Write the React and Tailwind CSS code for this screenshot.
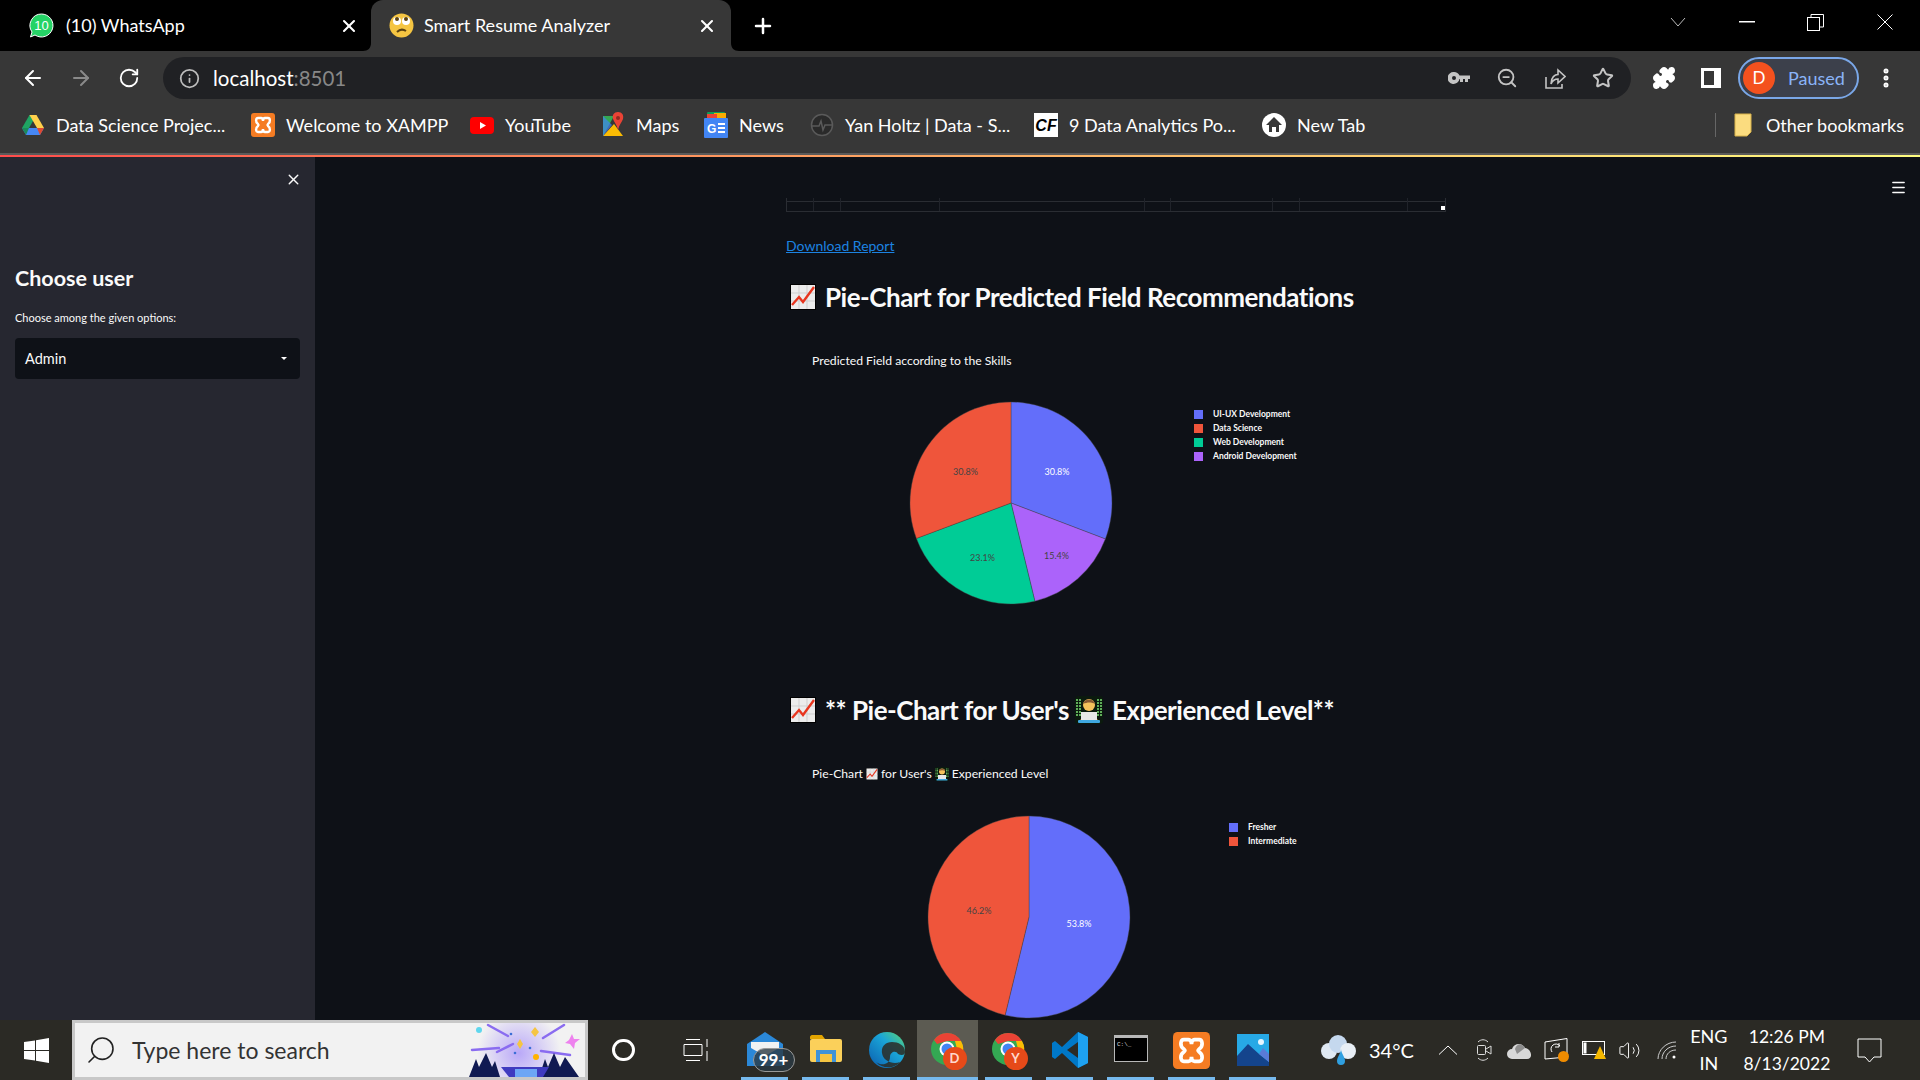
import { ArrowLeft, ArrowRight, RotateCw, Info, ZoomOut, Star, Puzzle, MoreVertical, X, Plus, Menu, Search, Volume2 } from 'lucide-react';

const FONT = "font-['Lato','Noto_Sans',sans-serif]";

function Pie({ slices, labels, size = 204 }) {
  const c = size / 2;
  const r = 101;
  let start = 0;
  const point = (deg) => {
    const a = ((deg - 90) * Math.PI) / 180;
    return [c + r * Math.cos(a), c + r * Math.sin(a)];
  };
  return (
    <svg width={size} height={size} viewBox={`0 0 ${size} ${size}`} className="shrink-0">
      {slices.map((s) => {
        const end = start + (s.pct / 100) * 360;
        const [x1, y1] = point(start);
        const [x2, y2] = point(end);
        const large = end - start > 180 ? 1 : 0;
        start = end;
        return <path key={s.color} d={`M${c} ${c}L${x1} ${y1}A${r} ${r} 0 ${large} 1 ${x2} ${y2}Z`} fill={s.color} stroke="#444" strokeWidth="0.4" />;
      })}
      {labels.map((l) => (
        <text key={l.t + l.x} x={l.x} y={l.y} textAnchor="middle" dominantBaseline="middle" fontSize="9" fontFamily="Lato" fill={l.fill}>
          {l.t}
        </text>
      ))}
    </svg>
  );
}

function Legend({ items }) {
  return (
    <div className="flex flex-col gap-[4px]">
      {items.map((i) => (
        <div key={i.name} className="flex items-center gap-[10px] h-[10px] text-[8.5px] font-bold text-[#fafafa]">
          <span className="w-[9px] h-[9px]" style={{ background: i.color }} />
          <span>{i.name}</span>
        </div>
      ))}
    </div>
  );
}

function ChartEmoji({ size = 26 }) {
  return (
    <svg width={size} height={size} viewBox="0 0 26 26" className="shrink-0">
      <rect width="26" height="26" fill="#000" />
      <rect x="1" y="1" width="24" height="24" fill="#ececec" />
      <path d="M1 9H25M1 17H25M9 1V25M17 1V25" stroke="#cfcfcf" />
      <path d="M2 21L9 13L13 18L24 3" stroke="#e8361f" strokeWidth="2.4" fill="none" />
    </svg>
  );
}

function TechEmoji({ size = 28 }) {
  return (
    <svg width={size} height={size} viewBox="0 0 28 28" className="shrink-0">
      <rect width="28" height="28" rx="3" fill="#0b1a0e" />
      <path d="M2 3V20M5 3V20M23 3V20M26 3V20" stroke="#5fae5a" strokeWidth="2" strokeDasharray="2 1" />
      <circle cx="14" cy="9" r="6" fill="#f6c25c" />
      <path d="M8 8C9 2 19 2 20 8C17 6 12 6 8 8Z" fill="#8a5a33" />
      <path d="M5 26C5 17 23 17 23 26Z" fill="#f2a93b" />
      <rect x="6" y="16" width="16" height="9" fill="#e8e8e8" />
      <rect x="3" y="24" width="22" height="3" rx="1" fill="#3fa7e0" />
    </svg>
  );
}

function DriveIcon() {
  return (
    <svg width="24" height="24" viewBox="0 0 24 24" className="shrink-0">
      <path d="M8.500 2H15.500L8 15H1Z" fill="#1fa463" />
      <path d="M8.500 2H15.500L23 15H16Z" fill="#ffd04b" />
      <path d="M1 15H23L19 22H5Z" fill="#4687f4" />
      <path d="M1 15L8 15L5 22Z" fill="#1a8a5a" />
      <path d="M16 15H23L19 22Z" fill="#e0492f" />
    </svg>
  );
}

function XamppIcon({ size = 24 }) {
  return (
    <svg width={size} height={size} viewBox="0 0 24 24" className="shrink-0">
      <rect width="24" height="24" rx="3" fill="#f57c23" />
      <path d="M7 5H10C12 5 12 8 12 8C12 8 12 5 14 5H17C19 5 20 9 17 11C16 12 16 12 17 13C20 15 19 19 17 19H14C12 19 12 16 12 16C12 16 12 19 10 19H7C5 19 4 15 7 13C8 12 8 12 7 11C4 9 5 5 7 5Z" fill="none" stroke="#fff" strokeWidth="2.400" />
    </svg>
  );
}

function YoutubeIcon() {
  return (
    <svg width="24" height="24" viewBox="0 0 24 24" className="shrink-0">
      <rect y="4" width="24" height="17" rx="4" fill="#f00" />
      <path d="M10 9L16 12.500L10 16Z" fill="#fff" />
    </svg>
  );
}

function MapsIcon() {
  return (
    <svg width="24" height="26" viewBox="0 0 24 26" className="shrink-0">
      <path d="M2 4L13 4L2 24Z" fill="#34a853" />
      <path d="M2 24L13 12L22 24Z" fill="#fbbc04" />
      <path d="M2 4L11 13L2 24Z" fill="#4285f4" opacity="0.7" />
      <path d="M17 0C13 0 11 3 12 7C13 10 16 13 17 18C18 13 21 10 22 7C23 3 21 0 17 0Z" fill="#ea4335" />
      <circle cx="17" cy="6" r="2" fill="#8f2a20" />
    </svg>
  );
}

function NewsIcon() {
  return (
    <svg width="24" height="26" viewBox="0 0 24 26" className="shrink-0">
      <rect x="3" y="0" width="18" height="8" rx="1" fill="#0c9d58" />
      <rect x="10" y="1" width="12" height="7" fill="#f9ab00" />
      <rect x="3" y="2" width="10" height="6" fill="#ea4335" />
      <rect y="6" width="24" height="20" rx="1" fill="#4285f4" />
      <text x="3" y="21" fontSize="12" fontWeight="700" fontFamily="Liberation Sans" fill="#fff">G</text>
      <path d="M14 12H21M14 16H21M14 20H21" stroke="#fff" strokeWidth="2" />
    </svg>
  );
}

function ChromeIcon({ letter }) {
  return (
    <div className="relative w-[36px] h-[36px]">
      <svg width="34" height="34" viewBox="0 0 34 34" className="absolute left-0 top-0">
        <circle cx="17" cy="17" r="16" fill="#34a853" />
        <path d="M17 1A16 16 0 0 1 31 9H17L7 12L4 8A16 16 0 0 1 17 1Z" fill="#ea4335" />
        <path d="M31 9A16 16 0 0 1 20 33L27 17L25 9Z" fill="#fbbc04" />
        <circle cx="17" cy="17" r="7.500" fill="#fff" />
        <circle cx="17" cy="17" r="5.500" fill="#4285f4" />
      </svg>
      <span className="absolute left-[13px] top-[15px] w-[24px] h-[23px] rounded-full bg-[#e64a19] text-[13px] font-bold text-[#ffd9cc] flex items-center justify-center">{letter}</span>
    </div>
  );
}

function Bookmark({ icon, label, width }) {
  return (
    <div className="flex items-center gap-[11px] shrink-0" style={{ width }}>
      {icon}
      <span className="whitespace-nowrap">{label}</span>
    </div>
  );
}

function TabBar() {
  return (
    <div className="h-[51px] bg-black flex items-end text-[18px] text-white shrink-0">
      <div className="w-[371px] h-[51px] flex items-center pl-[29px] pr-[12px]">
        <svg width="25" height="25" viewBox="0 0 25 25" className="shrink-0">
          <path d="M12.500 1A11.500 11.500 0 1 1 6 22L1.500 24L3 19A11.500 11.500 0 0 1 12.500 1Z" fill="#25d366" stroke="#fff" strokeWidth="1" />
          <text x="12.500" y="17" textAnchor="middle" fontSize="13" fontFamily="Liberation Sans" fill="#fff">10</text>
        </svg>
        <span className="ml-[12px] flex-1">(10) WhatsApp</span>
        <X size={20} strokeWidth={2.5} />
      </div>
      <div className="relative w-[360px] h-[51px] bg-[#373737] rounded-t-[12px] flex items-center pl-[18px] pr-[14px]">
        <svg width="8" height="8" viewBox="0 0 8 8" className="absolute -left-[8px] bottom-0">
          <path d="M8 0V8H0C5 8 8 5 8 0Z" fill="#373737" />
        </svg>
        <svg width="8" height="8" viewBox="0 0 8 8" className="absolute -right-[8px] bottom-0">
          <path d="M0 0V8H8C3 8 0 5 0 0Z" fill="#373737" />
        </svg>
        <svg width="25" height="25" viewBox="0 0 25 25" className="shrink-0">
          <circle cx="12.500" cy="12.500" r="12" fill="#f5c542" />
          <circle cx="8" cy="8" r="4" fill="#fff" />
          <circle cx="17" cy="8" r="4" fill="#fff" />
          <circle cx="8" cy="6" r="2" fill="#5b4210" />
          <circle cx="17" cy="6" r="2" fill="#5b4210" />
          <path d="M8 19C11 16 14 16 17 18" stroke="#5b4210" strokeWidth="2" fill="none" />
        </svg>
        <span className="ml-[10px] flex-1">Smart Resume Analyzer</span>
        <X size={20} strokeWidth={2.5} />
      </div>
      <div className="h-[51px] flex items-center ml-[20px]">
        <Plus size={24} strokeWidth={2.5} />
      </div>
      <div className="ml-auto h-[44px] self-start flex items-center text-white mr-px">
        <div className="w-[69px] flex justify-center">
          <svg width="16" height="10" viewBox="0 0 16 10" fill="none" stroke="#bbb"><path d="M1 1L8 9L15 1" /></svg>
        </div>
        <div className="w-[69px] flex justify-center">
          <svg width="16" height="2" viewBox="0 0 16 2"><rect width="16" height="1.500" fill="#fff" /></svg>
        </div>
        <div className="w-[69px] flex justify-center">
          <svg width="17" height="17" viewBox="0 0 17 17" fill="none" stroke="#fff">
            <rect x="0.500" y="3.500" width="12" height="13" />
            <path d="M4 3V0.500H16.500V13H13" />
          </svg>
        </div>
        <div className="w-[69px] flex justify-center">
          <svg width="16" height="16" viewBox="0 0 16 16" fill="none" stroke="#fff"><path d="M0.500 0.500L15.500 15.500M15.500 0.500L0.500 15.500" /></svg>
        </div>
      </div>
    </div>
  );
}

function Toolbar() {
  return (
    <div className="h-[54px] bg-[#373737] flex items-center text-white shrink-0">
      <ArrowLeft size={24} className="ml-[21px]" />
      <ArrowRight size={24} className="ml-[24px] text-[#8a8a8a]" />
      <RotateCw size={22} className="ml-[25px]" />
      <div className="ml-[23px] w-[1468px] h-[42px] rounded-full bg-[#202124] flex items-center pl-[16px] pr-[17px]">
        <Info size={21} className="text-[#bdbdbd]" />
        <span className="ml-[13px] text-[20.5px]">localhost<span className="text-[#888]">:8501</span></span>
        <div className="ml-auto flex items-center gap-[26px] text-[#c4c4c4]">
          <svg width="22" height="22" viewBox="0 0 22 22" fill="#c4c4c4">
            <path fillRule="evenodd" d="M6 5A6 6 0 0 1 11.500 8.500H22V12H20V15H17V12H15V15H12V12H11.500A6 6 0 1 1 6 5ZM6 9A2 2 0 1 0 6 13A2 2 0 0 0 6 9Z" />
          </svg>
          <ZoomOut size={22} />
          <svg width="22" height="24" viewBox="0 0 22 24" fill="none" stroke="#c4c4c4" strokeWidth="1.600">
            <path d="M2 11V22H18V18" />
            <path d="M7 18C7 11 11 8.500 14 8.500V4L21 10.500L14 17V13C11 13 8.500 14.500 7 18Z" />
          </svg>
          <Star size={22} strokeWidth={2.2} />
        </div>
      </div>
      <Puzzle size={24} fill="#fff" className="ml-[21px]" />
      <svg width="20" height="20" viewBox="0 0 20 20" className="ml-[25px]">
        <rect width="20" height="20" fill="#fff" />
        <rect x="3" y="3" width="10" height="14" fill="#373737" />
      </svg>
      <div className="ml-[17px] w-[121px] h-[42px] rounded-full border-2 border-[#7aa7e8] bg-[#3c404b] flex items-center pl-[3px]">
        <span className="w-[32px] h-[32px] rounded-full bg-[#f4511e] flex items-center justify-center text-[17px]">D</span>
        <span className="ml-[13px] text-[18px] text-[#8ab4f8]">Paused</span>
      </div>
      <MoreVertical size={24} strokeWidth={3} className="ml-[15px]" />
    </div>
  );
}

function Bookmarks() {
  return (
    <div className="h-[48px] pb-[8px] bg-[#373737] flex items-center text-[18px] text-white shrink-0 pl-[21px] pr-[16px]">
      <Bookmark icon={<DriveIcon />} label="Data Science Projec..." width={230} />
      <Bookmark icon={<XamppIcon />} label="Welcome to XAMPP" width={219} />
      <Bookmark icon={<YoutubeIcon />} label="YouTube" width={131} />
      <Bookmark icon={<MapsIcon />} label="Maps" width={103} />
      <Bookmark icon={<NewsIcon />} label="News" width={106} />
      <Bookmark
        icon={
          <svg width="24" height="24" viewBox="0 0 24 24" fill="none" stroke="#5a5a5a" strokeWidth="1.500" className="shrink-0">
            <circle cx="12" cy="12" r="10.500" fill="#2a2a2a" />
            <path d="M2 13L9 13L11 8L13 17L15 12L22 12" />
          </svg>
        }
        label="Yan Holtz | Data - S..."
        width={224}
      />
      <Bookmark
        icon={
          <svg width="24" height="24" viewBox="0 0 24 24" className="shrink-0">
            <rect width="24" height="24" fill="#fff" />
            <text x="12" y="18" textAnchor="middle" fontSize="16" fontWeight="700" fontStyle="italic" fontFamily="Liberation Sans" fill="#000">CF</text>
          </svg>
        }
        label="9 Data Analytics Po..."
        width={228}
      />
      <Bookmark
        icon={
          <svg width="24" height="24" viewBox="0 0 24 24" className="shrink-0">
            <circle cx="12" cy="12" r="12" fill="#fff" />
            <path d="M12 4L20 12H17V19H14V14H10V19H7V12H4Z" fill="#373737" />
          </svg>
        }
        label="New Tab"
        width={120}
      />
      <div className="ml-auto flex items-center">
        <span className="w-px h-[24px] bg-[#666] mr-[18px]" />
        <svg width="18" height="24" viewBox="0 0 18 24" className="shrink-0">
          <path d="M1 1H17V19L13 23H1Z" fill="#fbdc7f" stroke="#d8b24a" />
        </svg>
        <span className="ml-[14px]">Other bookmarks</span>
      </div>
    </div>
  );
}

function Sidebar() {
  return (
    <div className="w-[315px] bg-[#262730] shrink-0 flex flex-col px-[15px] text-[#fafafa]">
      <div className="flex justify-end pt-[14px] -mr-[2px]">
        <X size={17} strokeWidth={2} />
      </div>
      <h2 className="mt-[75px] text-[21.5px] font-bold leading-[30px]">Choose user</h2>
      <p className="mt-[18px] text-[11px] leading-[14px]">Choose among the given options:</p>
      <div className="mt-[13px] h-[41px] rounded-[4px] bg-[#0e1117] flex items-center px-[10px] text-[14.5px]">
        Admin
        <span className="ml-auto mr-[3px] w-0 h-0 border-x-[3px] border-x-transparent border-t-[3px] border-t-white" />
      </div>
    </div>
  );
}

function Main() {
  return (
    <div className="flex-1 min-w-0 relative overflow-hidden text-[#fafafa]">
      <Menu size={17} className="absolute top-[22px] right-[13px]" />
      <div className="w-[660px] ml-[471px]">
        {/* tail of the dataframe scroll strip */}
        <div className="relative mt-[41px] h-[14px] border-x border-b border-[#2a2d33]">
          <div className="h-[4px] border-b border-[#2a2d33]" />
          <div className="absolute inset-0 flex">
            {[27, 27, 99, 205, 26, 102, 27, 108].map((w, i) => (
              <div key={i} className="border-r border-[#20232a]" style={{ width: w }} />
            ))}
          </div>
          <span className="absolute right-0 bottom-[1px] w-[4px] h-[4px] bg-white" />
        </div>
        <a className="block mt-[24px] text-[14px] leading-[20px] underline text-[#1c83e1]">Download Report</a>

        <h2 className="mt-[23px] h-[36px] flex items-center pl-[4px] text-[26px] tracking-[-0.49px] font-bold">
          <ChartEmoji />
          <span className="ml-[9px]">Pie-Chart for Predicted Field Recommendations</span>
        </h2>
        <div className="mt-[36px] pl-[26px] h-[20px] flex items-center text-[12.2px]">Predicted Field according to the Skills</div>
        <div className="flex mt-[30px] h-[204px]">
          <div className="ml-[123px]">
            <Pie
              slices={[
                { pct: 30.8, color: '#636efa' },
                { pct: 15.4, color: '#ab63fa' },
                { pct: 23.1, color: '#00cc96' },
                { pct: 30.7, color: '#ef553b' },
              ]}
              labels={[
                { t: '30.8%', x: 148, y: 72, fill: '#fff' },
                { t: '30.8%', x: 56.5, y: 72, fill: '#444' },
                { t: '23.1%', x: 73.5, y: 158, fill: '#444' },
                { t: '15.4%', x: 147.5, y: 156, fill: '#444' },
              ]}
            />
          </div>
          <div className="ml-[81px] mt-[8px]">
            <Legend
              items={[
                { name: 'UI-UX Development', color: '#636efa' },
                { name: 'Data Science', color: '#ef553b' },
                { name: 'Web Development', color: '#00cc96' },
                { name: 'Android Development', color: '#ab63fa' },
              ]}
            />
          </div>
        </div>

        <h2 className="mt-[87px] h-[36px] flex items-center pl-[4px] text-[26px] tracking-[-0.49px] font-bold">
          <ChartEmoji />
          <span className="ml-[9px]">** Pie-Chart for User's</span>
          <span className="ml-[6px]"><TechEmoji /></span>
          <span className="ml-[9px]">Experienced Level**</span>
        </h2>
        <div className="mt-[36px] pl-[26px] h-[20px] flex items-center text-[12.2px]">
          Pie-Chart<span className="mx-[3px]"><ChartEmoji size={12} /></span>for User's<span className="mx-[3px]"><TechEmoji size={14} /></span>Experienced Level
        </div>
        <div className="flex mt-[31px] h-[204px]">
          <div className="ml-[141px]">
            <Pie
              slices={[
                { pct: 53.8, color: '#636efa' },
                { pct: 46.2, color: '#ef553b' },
              ]}
              labels={[
                { t: '53.8%', x: 152, y: 110, fill: '#fff' },
                { t: '46.2%', x: 52, y: 97, fill: '#444' },
              ]}
            />
          </div>
          <div className="ml-[98px] mt-[7px]">
            <Legend
              items={[
                { name: 'Fresher', color: '#636efa' },
                { name: 'Intermediate', color: '#ef553b' },
              ]}
            />
          </div>
        </div>
      </div>
    </div>
  );
}

function TaskItem({ children, active }) {
  return (
    <div className={`relative w-[61px] h-[60px] flex items-center justify-center shrink-0 ${active ? 'bg-[#5c5b52]' : ''}`}>
      {children}
      <span className={`absolute bottom-0 h-[3px] bg-[#76b9ed] ${active ? 'left-0 right-0' : 'left-[7px] right-[7px]'}`} />
    </div>
  );
}

function Taskbar() {
  return (
    <div className="h-[60px] bg-[#2b2a25] shrink-0 flex items-center text-white relative">
      <svg width="25" height="25" viewBox="0 0 25 25" className="ml-[24px] shrink-0" fill="#fff">
        <path d="M0 4L11 2.500V12H0ZM12 2.300L25 0V12H12ZM0 13H11V22.500L0 21ZM12 13H25V25L12 22.700Z" />
      </svg>
      <div className="ml-[23px] w-[516px] h-[60px] bg-[#f2f2f2] border-[3px] border-[#c8c8c8] flex items-center pl-[10px] relative overflow-hidden text-[#333]">
        <Search size={32} strokeWidth={1.2} className="-scale-x-100 text-[#222]" />
        <span className="ml-[15px] text-[23px]">Type here to search</span>
        <svg width="118" height="54" viewBox="0 0 118 54" className="absolute right-0 top-0">
          <defs>
            <radialGradient id="glow">
              <stop offset="0%" stopColor="#b9a8f8" />
              <stop offset="100%" stopColor="#f2f2f2" />
            </radialGradient>
          </defs>
          <circle cx="52" cy="30" r="42" fill="url(#glow)" />
          <circle cx="12" cy="7" r="3" fill="#5fd7ee" />
          <path d="M21 2L41 13M97 2L76 15M5 27L32 25M103 32L74 28M30 29L46 21" stroke="#8a6cf0" strokeWidth="2.500" strokeLinecap="round" />
          <path d="M68 4L72 9L68 14L64 9Z M53 16L56 21L53 26L50 21Z" fill="#f5c542" />
          <path d="M105 11L107 16L113 16L108 20L107 26L103 21L98 20L102 17Z" fill="#ee82ee" />
          <circle cx="69" cy="34" r="3" fill="#ffb300" />
          <circle cx="44" cy="11" r="1.300" fill="#3b6fd6" />
          <circle cx="48" cy="30" r="1.300" fill="#3b6fd6" />
          <circle cx="63" cy="25" r="1.300" fill="#3b6fd6" />
          <path d="M2 54L9 36L12 44L19 30L25 44L28 38L33 54Z M72 54L78 36L81 44L87 30L93 44L98 34L105 44L112 54Z" fill="#101a52" />
          <path d="M34 44H82L76 54H42Z" fill="#3f3bbf" />
          <rect x="48" y="46" width="22" height="8" fill="#6da6f5" />
        </svg>
      </div>
      <span className="ml-[24px] w-[23px] h-[22px] rounded-full border-[3px] border-white shrink-0" />
      <svg width="25" height="22" viewBox="0 0 25 22" fill="none" stroke="#fff" className="ml-[48px] shrink-0">
        <path d="M3 0.500H17M1 5.500H19V16.500H1ZM3 21.500H17M24 0V8M24 12V22" />
      </svg>
      <div className="ml-[26px] flex items-center">
        <TaskItem>
          <div className="relative w-[36px] h-[36px]">
            <svg width="36" height="34" viewBox="0 0 36 34">
              <path d="M18 0L36 12V34H0V12Z" fill="#2b88d8" />
              <path d="M4 10H32V16L18 24L4 16Z" fill="#f2f2f2" />
            </svg>
            <span className="absolute left-[6px] top-[16px] w-[42px] h-[24px] rounded-full border border-[#999] bg-[#2b3a44cc] text-[17px] font-bold flex items-center justify-center">99+</span>
          </div>
        </TaskItem>
        <TaskItem>
          <svg width="32" height="27" viewBox="0 0 32 27" className="-mt-[3px]">
            <path d="M0 2C0 1 1 0 2 0H12L15 4H0Z" fill="#e2a400" />
            <rect y="4" width="32" height="23" rx="2" fill="#fbd05a" />
            <path d="M6 15H26V27H22V19H10V27H6Z" fill="#3f93d8" />
            <rect x="10" y="19" width="12" height="8" fill="#f5c542" />
          </svg>
        </TaskItem>
        <TaskItem>
          <svg width="36" height="36" viewBox="0 0 36 36">
            <defs>
              <linearGradient id="edge" x1="0" y1="1" x2="1" y2="0">
                <stop offset="0%" stopColor="#0b5cad" />
                <stop offset="60%" stopColor="#1aa5d8" />
                <stop offset="100%" stopColor="#5ed66d" />
              </linearGradient>
            </defs>
            <circle cx="18" cy="18" r="18" fill="url(#edge)" />
            <path d="M36 20C36 13 29 10 23 10C16 10 12 15 13 21C14 29 24 33 31 30C27 36 14 38 7 30C12 34 21 33 21 25C21 20 27 18 29 22C33 24 36 23 36 20Z" fill="#2b2a25" opacity="0.85" />
          </svg>
        </TaskItem>
        <TaskItem active>
          <ChromeIcon letter="D" />
        </TaskItem>
        <TaskItem>
          <ChromeIcon letter="Y" />
        </TaskItem>
        <TaskItem>
          <svg width="36" height="36" viewBox="0 0 36 36">
            <path d="M26 0L36 5V31L26 36L10 21L3 27L0 25V11L3 9L10 15Z" fill="#0078c8" />
            <path d="M26 0L36 5V31L26 36Z" fill="#1ea1f1" />
            <path d="M26 10L15 18L26 26Z" fill="#2b2a25" />
          </svg>
        </TaskItem>
        <TaskItem>
          <svg width="34" height="27" viewBox="0 0 34 27" className="-mt-[3px]">
            <rect width="34" height="27" fill="#b8b8b8" />
            <rect x="1" y="3" width="32" height="23" fill="#000" />
            <text x="3" y="11" fontSize="6" fontFamily="Liberation Mono" fill="#ddd">C:\_</text>
          </svg>
        </TaskItem>
        <TaskItem>
          <XamppIcon size={37} />
        </TaskItem>
        <TaskItem>
          <svg width="32" height="32" viewBox="0 0 32 32">
            <rect width="32" height="32" fill="#27a9e6" />
            <circle cx="24" cy="8" r="3" fill="#e6f6ff" />
            <path d="M0 32V22L11 10L22 20L32 28V32Z" fill="#14448c" />
            <path d="M22 20L26 14L32 20V28Z" fill="#5a7bd8" />
          </svg>
        </TaskItem>
      </div>
      <svg width="35" height="30" viewBox="0 0 35 30" className="ml-[38px] shrink-0">
        <circle cx="8" cy="16" r="8" fill="#dfe8f2" />
        <circle cx="17" cy="9" r="9" fill="#c5d8ee" />
        <circle cx="27" cy="16" r="8" fill="#e9eff6" />
        <path d="M20 14C20 18 24 22 24 26A4 4 0 0 1 16 26C16 22 20 18 20 14Z" fill="#2f9fe0" />
      </svg>
      <span className="ml-[13px] text-[20px]">34°C</span>
      <svg width="20" height="10" viewBox="0 0 20 10" fill="none" stroke="#fff" className="ml-[24px] shrink-0"><path d="M1 9.500L10 1L19 9.500" /></svg>
      <svg width="16" height="22" viewBox="0 0 16 22" fill="none" stroke="#ddd" className="ml-[18px] shrink-0">
        <path d="M2 3C5 0 9 0 12 3M2 19C5 22 9 22 12 19" />
        <rect x="1.500" y="6.500" width="8" height="9" rx="1" />
        <path d="M10 10L15 7V15L10 12" />
      </svg>
      <svg width="25" height="17" viewBox="0 0 25 17" className="ml-[15px] shrink-0">
        <path d="M5 17A5 5 0 0 1 5 7C7 1 15 0 18 6C24 6 27 17 20 17Z" fill="#d8d8d8" />
        <path d="M8 7C10 1 15 1 18 6L10 12Z" fill="#8d8d8d" />
      </svg>
      <div className="relative ml-[12px] w-[25px] h-[24px] shrink-0">
        <svg width="25" height="24" viewBox="0 0 25 24" fill="none" stroke="#fff">
          <path d="M1 4L23 0.500V19L1 21Z" />
          <path d="M8 14A5 5 0 0 1 16 8M15 5V9H11" />
        </svg>
        <span className="absolute right-0 bottom-0 w-[11px] h-[11px] rounded-full bg-[#f08c00]" />
      </div>
      <div className="relative ml-[13px] w-[25px] h-[20px] shrink-0">
        <svg width="25" height="20" viewBox="0 0 25 20" fill="none" stroke="#fff">
          <rect x="0.500" y="1.500" width="22" height="13" />
          <rect x="2" y="3" width="2" height="10" fill="#fff" />
          <path d="M18 6L24 19H12Z" fill="#f5b800" stroke="none" />
        </svg>
      </div>
      <Volume2 size={23} strokeWidth={1} className="ml-[11px] shrink-0" />
      <svg width="20" height="19" viewBox="0 0 20 19" fill="none" stroke="#ccc" className="ml-[16px] shrink-0">
        <path d="M1 18C1 9 9 1 19 1M5 18C5 11 11 5 19 5M9 18C9 13 13 9 19 9" />
        <circle cx="17" cy="16" r="1.500" fill="#fff" stroke="none" />
      </svg>
      <div className="ml-[14px] w-[36px] flex flex-col items-center text-[18px] leading-[27px]">
        <span>ENG</span>
        <span>IN</span>
      </div>
      <div className="ml-[12px] w-[96px] flex flex-col items-center text-[17.5px] leading-[27px]">
        <span>12:26 PM</span>
        <span>8/13/2022</span>
      </div>
      <svg width="25" height="25" viewBox="0 0 25 25" fill="none" stroke="#fff" className="ml-[22px] shrink-0">
        <path d="M1 1H24V19H17L12.500 24L8 19H1Z" />
      </svg>
    </div>
  );
}

export default function App() {
  return (
    <div className={`w-[1920px] h-[1080px] flex flex-col overflow-hidden bg-[#0e1117] ${FONT}`}>
      <TabBar />
      <Toolbar />
      <Bookmarks />
      <div className="h-[2px] bg-[#5a5a5a] shrink-0" />
      <div className="h-[2px] bg-gradient-to-r from-[#ff4b4b] to-[#fffd80] shrink-0" />
      <div className="flex-1 min-h-0 flex">
        <Sidebar />
        <Main />
      </div>
      <Taskbar />
    </div>
  );
}
